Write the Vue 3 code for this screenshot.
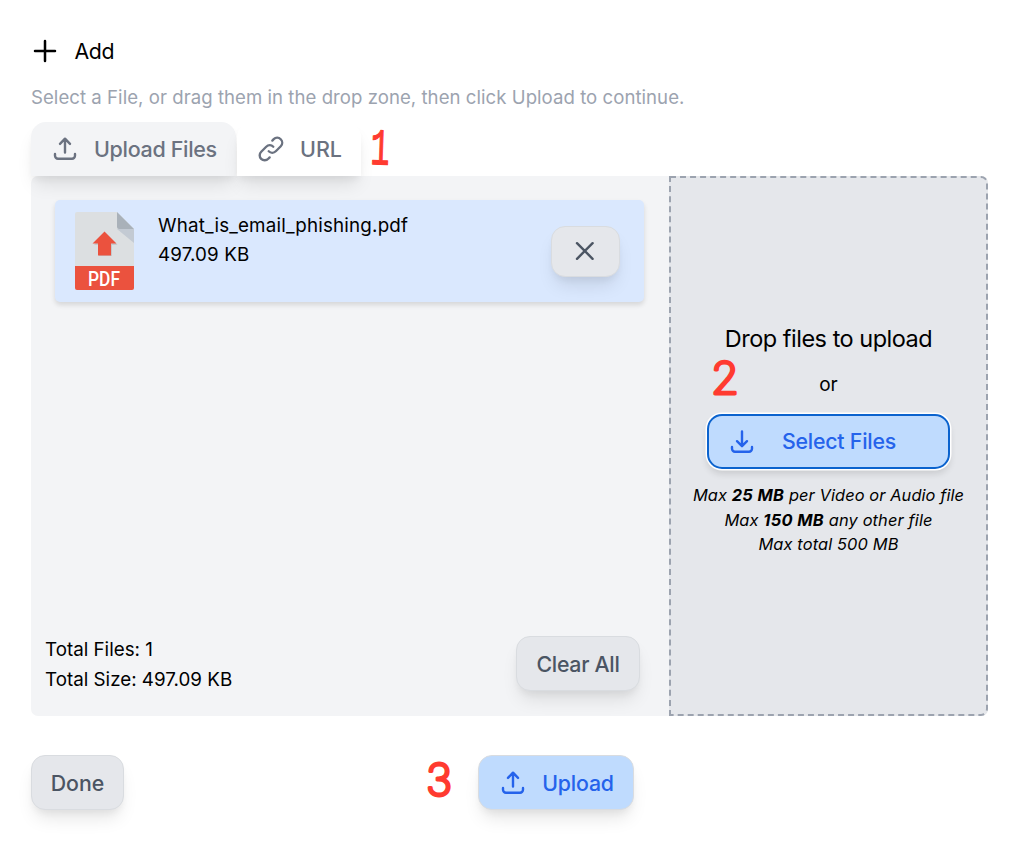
<script setup>
const file = { name: 'What_is_email_phishing.pdf', size: '497.09 KB' }
</script>

<template>
  <main class="page">
    <header class="head">
      <svg class="plus" width="24" height="24" viewBox="0 0 24 24"><path d="M12 2v20M2 12h20" /></svg>
      <h1 class="title">Add</h1>
    </header>
    <p class="hint">Select a File, or drag them in the drop zone, then click Upload to continue.</p>

    <nav class="tabs">
      <button class="tab active">
        <svg class="icon" width="24" height="24" viewBox="0 0 24 24"><path d="M2 17v1.700a3 3 0 0 0 3 3h14a3 3 0 0 0 3-3V17M12 15.500V2.200M7 6.900 12 1.700l5 5.200" /></svg>
        <span class="tab-files">Upload Files</span>
      </button>
      <button class="tab url">
        <svg class="icon link" width="30" height="30" viewBox="0 0 24 24"><path d="M13.828 10.172a4 4 0 0 0-5.656 0l-4 4a4 4 0 1 0 5.656 5.656l1.102-1.101m-.758-4.899a4 4 0 0 0 5.656 0l4-4a4 4 0 0 0-5.656-5.656l-1.100 1.100" /></svg>
        <span class="tab-url">URL</span>
      </button>
      <svg class="mark one" width="30" height="48" viewBox="0 0 30 48"><text x="0" y="0" transform="translate(1 40) rotate(2) scale(.64 1.030)">1</text></svg>
    </nav>

    <section class="panel">
      <div class="files">
        <article class="file">
          <svg class="pdf" width="59" height="78" viewBox="0 0 59 78">
            <path d="M2 0h40l17 17v38H0V2a2 2 0 0 1 2-2z" fill="#dcdfe1" />
            <path d="M42 17h17v14z" fill="#c3cad3" />
            <path d="M42 0l17 17H44a2 2 0 0 1-2-2z" fill="#a9b1b9" />
            <path d="M30.500 20.500l12 12.500h-5.500v11H24V33h-5z" fill="#aeb3b7" opacity=".5" />
            <path d="M29.500 19.500 41.500 31.500h-5.500v12H23v-12h-5.500z" fill="#eb523e" />
            <path d="M0 54h59v22a2 2 0 0 1-2 2H2a2 2 0 0 1-2-2z" fill="#eb523e" />
            <text x="13" y="73.500" textLength="32" lengthAdjust="spacingAndGlyphs">PDF</text>
          </svg>
          <div class="meta">
            <div class="name">{{ file.name }}</div>
            <div class="size">{{ file.size }}</div>
          </div>
          <button class="btn remove" aria-label="Remove">
            <svg width="20" height="20" viewBox="0 0 20 20"><path d="M2 2.200l15.600 15.600M17.600 2.200 2 17.800" /></svg>
          </button>
        </article>
        <footer class="summary">
          <div class="totals">
            <div class="total-files">Total Files: 1</div>
            <div class="total-size">Total Size: {{ file.size }}</div>
          </div>
          <button class="btn clear"><span>Clear All</span></button>
        </footer>
      </div>

      <aside class="drop">
        <div class="drop-title">Drop files to upload</div>
        <div class="or">or</div>
        <svg class="mark two" width="34" height="48" viewBox="0 0 34 48"><text x="0" y="0" transform="translate(2 38) scale(1.030 1)">2</text></svg>
        <button class="select">
          <svg class="icon" width="24" height="24" viewBox="0 0 24 24"><path d="M2 17v1.700a3 3 0 0 0 3 3h14a3 3 0 0 0 3-3V17M12 1.500V15.500M7 11.200 12 16.200l5-5" /></svg>
          <span>Select Files</span>
        </button>
        <div class="limits">
          <div class="l1">Max <b>25 MB</b> per Video or Audio file</div>
          <div class="l2">Max <b>150 MB</b> any other file</div>
          <div class="l3">Max total 500 MB</div>
        </div>
      </aside>
    </section>

    <footer class="actions">
      <button class="btn done"><span>Done</span></button>
      <svg class="mark three" width="34" height="48" viewBox="0 0 34 48"><text x="0" y="0" transform="translate(2 39.500) scale(1 1.030)">3</text></svg>
      <button class="btn upload">
        <svg class="icon" width="24" height="24" viewBox="0 0 24 24"><path d="M2 17v1.700a3 3 0 0 0 3 3h14a3 3 0 0 0 3-3V17M12 15.500V2.200M7 6.900 12 1.700l5 5.200" /></svg>
        <span>Upload</span>
      </button>
    </footer>
  </main>
</template>

<style>
body { background: #fff; }
</style>

<style scoped>
* { box-sizing: border-box; }
.page {
  width: 1024px;
  height: 845px;
  padding: 36px 36px 0 31px;
  overflow: hidden;
  background: #fff;
  color: #000;
  font-family: Inter, "Liberation Sans", sans-serif;
  font-size: 19px;
  line-height: 29.300px;
  white-space: nowrap;
}
button { margin: 0; padding: 0; border: 0; font: inherit; display: flex; align-items: center; }
button span { position: relative; top: 1px; }
svg { display: block; flex: none; overflow: visible; }
.plus, .icon, .remove svg { fill: none; stroke: currentColor; stroke-width: 2.400; stroke-linecap: round; stroke-linejoin: round; }
.plus { stroke-width: 2.500; }
.head { display: flex; align-items: center; height: 30px; padding-left: 2px; }
.title { margin: 2px 0 0 17.500px; font-size: 21.300px; font-weight: 400; letter-spacing: -.4px; }
.hint { margin: 17px 0 0; color: #9ca3af; font-size: 18.600px; letter-spacing: .04px; height: 29px; }
.tabs { position: relative; z-index: 1; display: flex; gap: 1px; margin-top: 10px; height: 54px; }
.tab {
  height: 54px;
  color: #6b7280;
  background: #fff;
  border-radius: 15px 15px 0 0;
  font-size: 21.500px;
  font-weight: 500;
  box-shadow: 0 12px 18px -4px rgba(0, 0, 0, .1), 0 5px 7px -2px rgba(0, 0, 0, .05);
}
.active { width: 205px; padding-left: 22px; background: #f3f4f6; }
.active span { margin-left: 17px; letter-spacing: -.33px; }
.url { width: 124px; padding-left: 19px; }
.url span { margin-left: 14px; }
.link { stroke-width: 1.900; }
.panel { display: flex; width: 957px; height: 540px; border-radius: 7px; background: #f3f4f6; }
.files { display: flex; flex-direction: column; justify-content: space-between; width: 638px; padding: 24px 29px 24px 15px; }
.file {
  display: flex;
  width: 589px;
  height: 102px;
  margin-left: 9px;
  padding: 12px 24px 0 20px;
  border-radius: 5px;
  background: #dae8fe;
  box-shadow: 0 3px 5px rgba(0, 0, 0, .12);
}
.pdf text { fill: #fff; font: 500 20.500px Roboto, sans-serif; }
.meta { margin-left: 24px; }
.meta, .totals { font-size: 18.800px; }
.meta { margin-top: -1px; }
.name { letter-spacing: .18px; }
.size { letter-spacing: .12px; }
.btn {
  justify-content: center;
  border: 1px solid #d9dce0;
  border-radius: 14px;
  background: #e5e7eb;
  color: #4b5563;
  font-size: 21.300px;
  font-weight: 500;
  box-shadow: 0 12px 18px -4px rgba(0, 0, 0, .1), 0 5px 7px -2px rgba(0, 0, 0, .05);
}
.remove { width: 69px; height: 51px; margin: 14px 0 0 auto; }
.remove svg { margin: -1px 1px 0 0; }
.summary { display: flex; justify-content: space-between; align-items: center; height: 57px; }
.totals { margin: 2px 0 0 -1px; }
.clear { width: 124px; height: 55px; }
.clear span { letter-spacing: -.28px; }
.drop {
  position: relative;
  display: flex;
  flex-direction: column;
  align-items: center;
  width: 319px;
  padding-top: 144px;
  border: 2px dashed #9ca3af;
  border-radius: 0 7px 7px 0;
  background: #e5e7eb;
}
.drop-title { font-size: 23.500px; height: 32px; line-height: 33px; letter-spacing: -.5px; }
.or { margin-top: 16px; height: 29px; }
.select {
  width: 243px;
  height: 55px;
  margin-top: 15px;
  padding-left: 21px;
  border: 2px solid #0b63ce;
  border-radius: 15px;
  background: #bfdbfe;
  color: #2563eb;
  font-size: 21.300px;
  font-weight: 500;
  box-shadow: 0 0 0 1.500px #fff, 0 5px 7px rgba(0, 0, 0, .12);
}
.select span { top: 0; margin-left: 28px; letter-spacing: -.22px; }
.limits { margin-top: 14px; font-size: 16.400px; letter-spacing: .13px; font-style: italic; line-height: 24.500px; text-align: center; }
.limits b { letter-spacing: .35px; }
.l1 { letter-spacing: .09px; }
.actions { position: relative; display: flex; margin-top: 39px; }
.done { width: 93px; height: 55px; }
.upload { width: 156px; height: 55px; margin-left: 354px; padding-left: 3px; color: #2563eb; background: #bfdbfe; }
.upload span { margin-left: 17px; letter-spacing: -.15px; }
.mark { position: absolute; }
.mark text { fill: #ff3b30; stroke: #ff3b30; stroke-width: 3; stroke-linejoin: round; font: 200 44px Inter, sans-serif; }
.mark.one text { font: 50px "Liberation Mono", monospace; stroke-width: 1.200; }
.one { left: 338px; top: 2px; }
.two { left: 38px; top: 178px; }
.three { left: 393px; top: 1px; }
</style>
